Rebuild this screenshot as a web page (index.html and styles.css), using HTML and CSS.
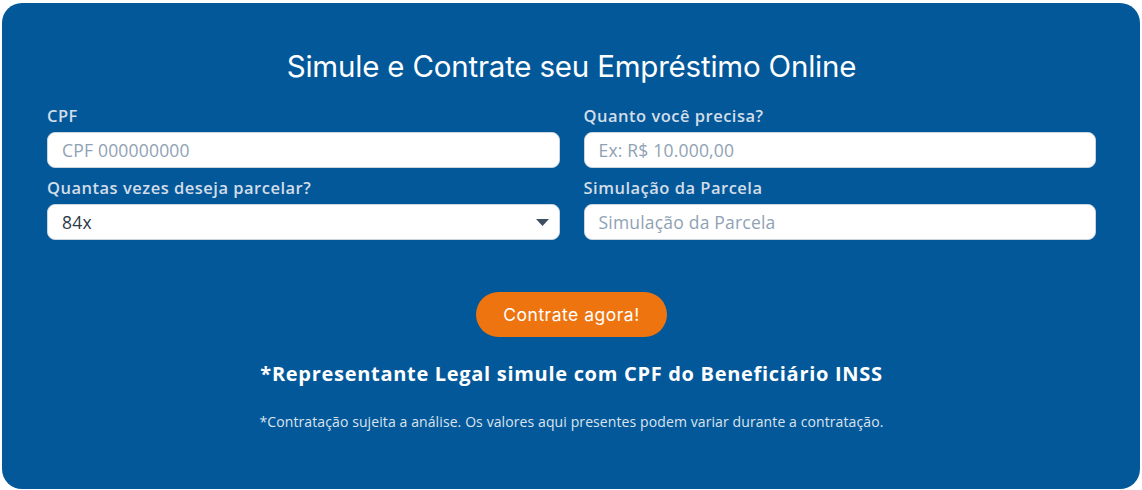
FILE: index.html
```html
<!DOCTYPE html>
<html lang="pt-BR">
<head>
<meta charset="utf-8">
<title>Simule e Contrate</title>
<link rel="stylesheet" href="styles.css">
</head>
<body>
<main class="card">
  <h1 class="title">Simule e Contrate seu Empréstimo Online</h1>
  <form class="form">
    <div class="field">
      <label class="label">CPF</label>
      <div class="input placeholder">CPF 000000000</div>
    </div>
    <div class="field">
      <label class="label">Quanto você precisa?</label>
      <div class="input placeholder">Ex: R$ 10.000,00</div>
    </div>
    <div class="field">
      <label class="label">Quantas vezes deseja parcelar?</label>
      <div class="input select">
        <span>84x</span>
        <svg class="caret" width="13" height="7" viewBox="0 0 13 7"><path d="M0 0H13L6.5 7Z" fill="#3d4f60"/></svg>
      </div>
    </div>
    <div class="field">
      <label class="label">Simulação da Parcela</label>
      <div class="input placeholder">Simulação da Parcela</div>
    </div>
  </form>
  <div class="actions">
    <button class="btn" type="button">Contrate agora!</button>
  </div>
  <p class="notice">*Representante Legal simule com CPF do Beneficiário INSS</p>
  <p class="disclaimer">*Contratação sujeita a análise. Os valores aqui presentes podem variar durante a contratação.</p>
</main>
</body>
</html>
```

FILE: styles.css
```css
* { box-sizing: border-box; }
html, body { margin: 0; padding: 0; background: #ffffff; }
body { padding: 3px 2px 0 2px; font-family: "Open Sans", "Noto Sans", sans-serif; }

.card {
  background: #03589a;
  border-radius: 20px;
  height: 486px;
  padding: 42px 44px 0 45px;
  color: #ffffff;
}

.title {
  margin: 0 0 19px 0;
  text-align: center;
  font-family: Inter, "Open Sans", sans-serif;
  font-weight: 400;
  font-size: 29.5px;
  letter-spacing: -0.2px;
  line-height: 42px;
}

.form {
  display: grid;
  grid-template-columns: 1fr 1fr;
  column-gap: 24px;
  row-gap: 10px;
}

.field { display: flex; flex-direction: column; }

.label {
  font-family: "Open Sans", sans-serif;
  font-size: 16.5px;
  font-weight: 600;
  color: #d3dde8;
  line-height: 20px;
  letter-spacing: 0.5px;
  margin-bottom: 6px;
}

.input {
  height: 36px;
  background: #ffffff;
  border-radius: 8px;
  border: 1px solid #c9d4de;
  padding: 0 14px;
  display: flex;
  align-items: center;
  font-family: "Open Sans", sans-serif;
  font-size: 17.5px;
  letter-spacing: 0.2px;
  color: #2f3a45;
}
.placeholder { color: #8fa2b4; }
.select { justify-content: space-between; padding-right: 10px; }
.caret { display: block; }

.actions { display: flex; justify-content: center; margin-top: 52px; }
.btn {
  width: 191px;
  height: 45px;
  border: none;
  border-radius: 23px;
  background: #ee7410;
  color: #ffffff;
  font-family: Inter, "Open Sans", sans-serif;
  font-size: 17.5px;
  letter-spacing: 0.5px;
  font-weight: 400;
  cursor: pointer;
}

.notice {
  margin: 23px 0 0 0;
  text-align: center;
  font-family: "Open Sans", sans-serif;
  font-weight: 700;
  font-size: 20px;
  letter-spacing: 0.7px;
  line-height: 28px;
}

.disclaimer {
  margin: 25px 0 0 0;
  text-align: center;
  font-family: "Open Sans", sans-serif;
  font-size: 14px;
  letter-spacing: 0.1px;
  color: #dbe4ee;
  line-height: 18px;
}
```
